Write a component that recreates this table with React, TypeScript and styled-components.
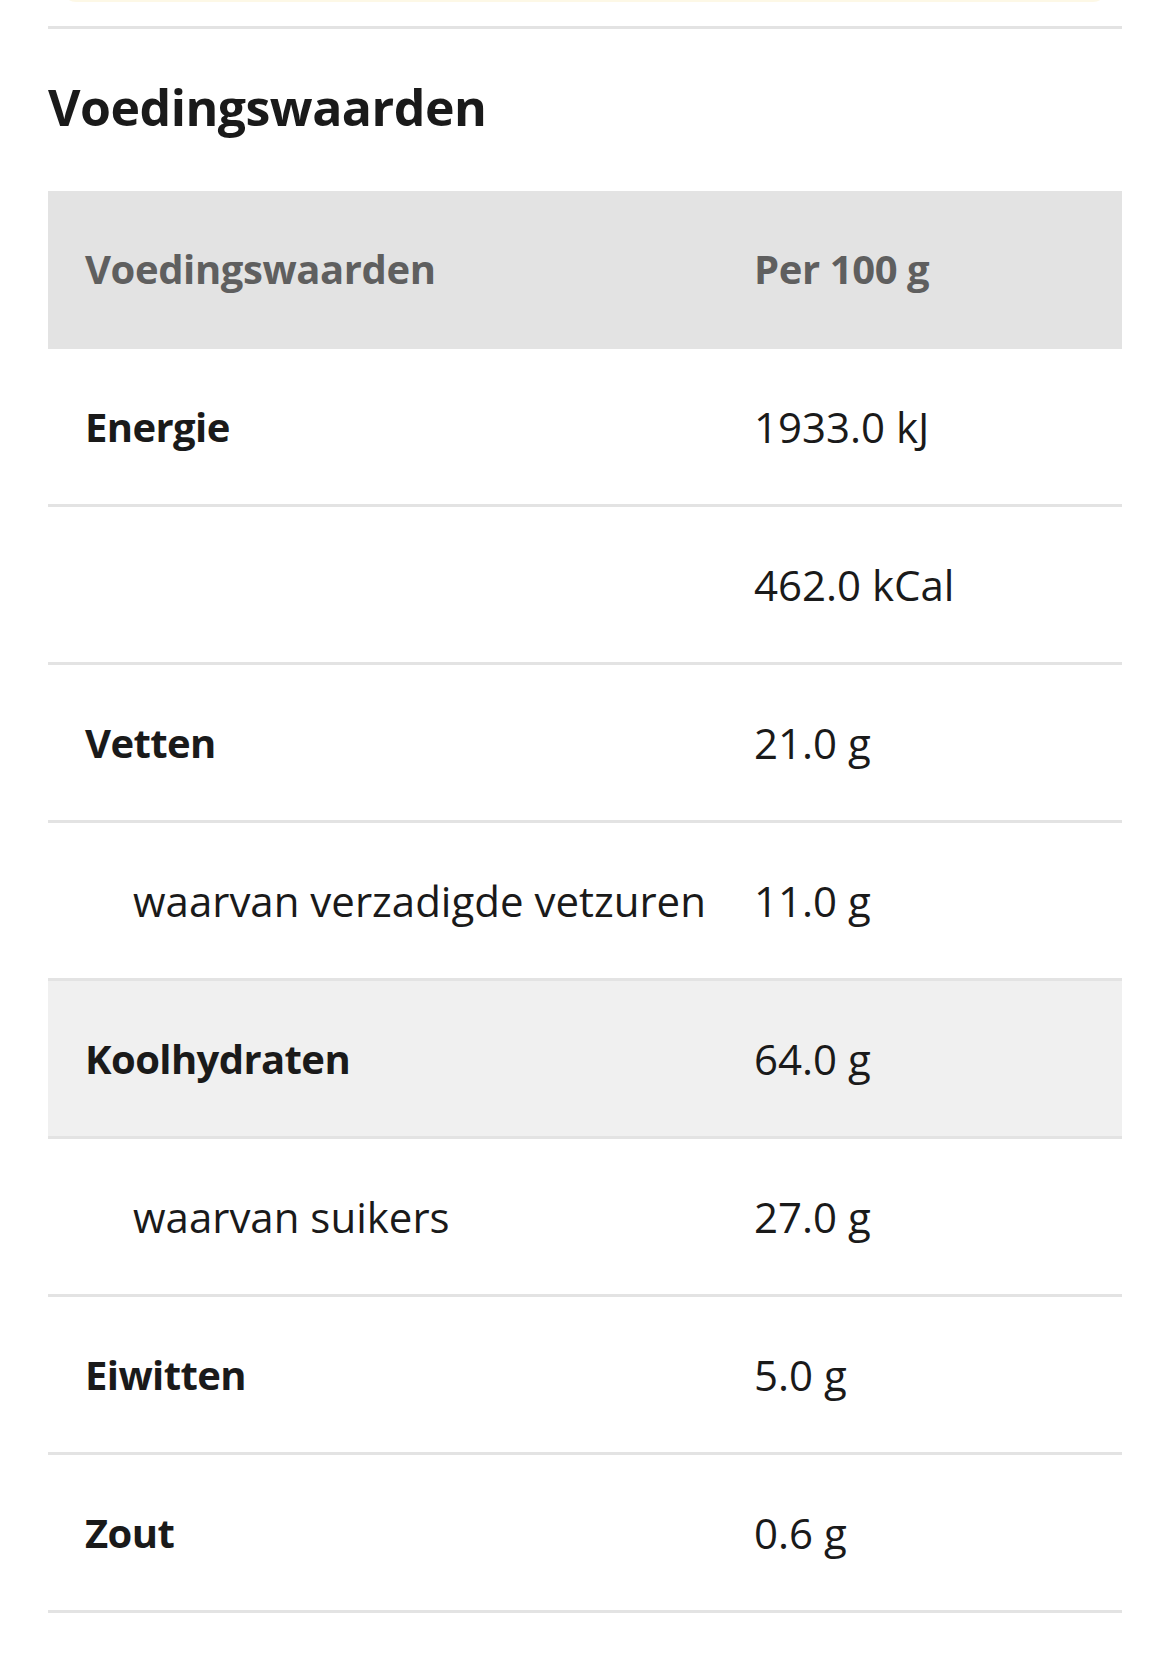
import React from "react";
import styled, { createGlobalStyle } from "styled-components";

const NUTRIENTS = [
  { id: 0, name: "Energie", value: "1933.0 kJ", bold: true },
  { id: 1, name: "", value: "462.0 kCal", bold: true },
  { id: 2, name: "Vetten", value: "21.0 g", bold: true },
  { id: 3, name: "waarvan verzadigde vetzuren", value: "11.0 g", sub: true },
  { id: 4, name: "Koolhydraten", value: "64.0 g", bold: true, highlight: true },
  { id: 5, name: "waarvan suikers", value: "27.0 g", sub: true },
  { id: 6, name: "Eiwitten", value: "5.0 g", bold: true },
  { id: 7, name: "Zout", value: "0.6 g", bold: true },
];

const GlobalStyle = createGlobalStyle`
  body {
    margin: 0;
    background: #fff;
    font-family: "Open Sans", Lato, sans-serif;
    color: #1a1a1a;
  }
`;

const App = () => {
  return (
    <S.Page>
      <GlobalStyle />
      <S.TopCard />
      <S.Divider />
      <S.Title>Voedingswaarden</S.Title>
      <S.Table>
        <S.HeadRow>
          <S.HeadCell>Voedingswaarden</S.HeadCell>
          <S.HeadCell>Per 100 g</S.HeadCell>
        </S.HeadRow>
        {NUTRIENTS.map((item) => (
          <S.Row key={item.id} highlight={!!item.highlight}>
            <S.NameCell bold={!!item.bold} sub={!!item.sub}>
              {item.name}
            </S.NameCell>
            <S.ValueCell>{item.value}</S.ValueCell>
          </S.Row>
        ))}
      </S.Table>
    </S.Page>
  );
};

export default App;

const S = {
  Page: styled.div`
    padding: 0 31px 60px 48px;
    overflow: hidden;
  `,
  TopCard: styled.div`
    height: 40px;
    margin: -38px 15px 0 14px;
    border-radius: 14px;
    background-color: #fdf8e6;
  `,
  Divider: styled.div`
    height: 3px;
    margin-top: 24px;
    background-color: #e3e3e3;
  `,
  Title: styled.h2`
    margin: 0;
    padding: 44px 0 50px;
    font-size: 50px;
    line-height: 68px;
    font-weight: 700;
    letter-spacing: -0.5px;
    color: #1a1a1a;
  `,
  Table: styled.div`
    display: flex;
    flex-direction: column;
  `,
  HeadRow: styled.div`
    display: grid;
    grid-template-columns: 669px 1fr;
    align-items: center;
    height: 158px;
    background-color: #e3e3e3;
  `,
  HeadCell: styled.div`
    padding: 0 0 4px 37px;
    font-size: 40px;
    font-weight: 700;
    letter-spacing: -0.4px;
    color: #5f5f5f;
  `,
  Row: styled.div<{ highlight: boolean }>`
    display: grid;
    grid-template-columns: 669px 1fr;
    align-items: center;
    height: 158px;
    box-sizing: border-box;
    border-bottom: 3px solid #e3e3e3;
    background-color: ${(props) => (props.highlight ? "#f0f0f0" : "#fff")};
  `,
  NameCell: styled.div<{ bold: boolean; sub: boolean }>`
    padding-left: ${(props) => (props.sub ? "85px" : "37px")};
    font-size: ${(props) => (props.bold ? "40px" : "42px")};
    font-weight: ${(props) => (props.bold ? 700 : 400)};
    letter-spacing: ${(props) => (props.bold ? "-0.6px" : "0")};
    white-space: nowrap;
  `,
  ValueCell: styled.div`
    padding-left: 37px;
    font-size: 42px;
    font-weight: 400;
  `,
};
